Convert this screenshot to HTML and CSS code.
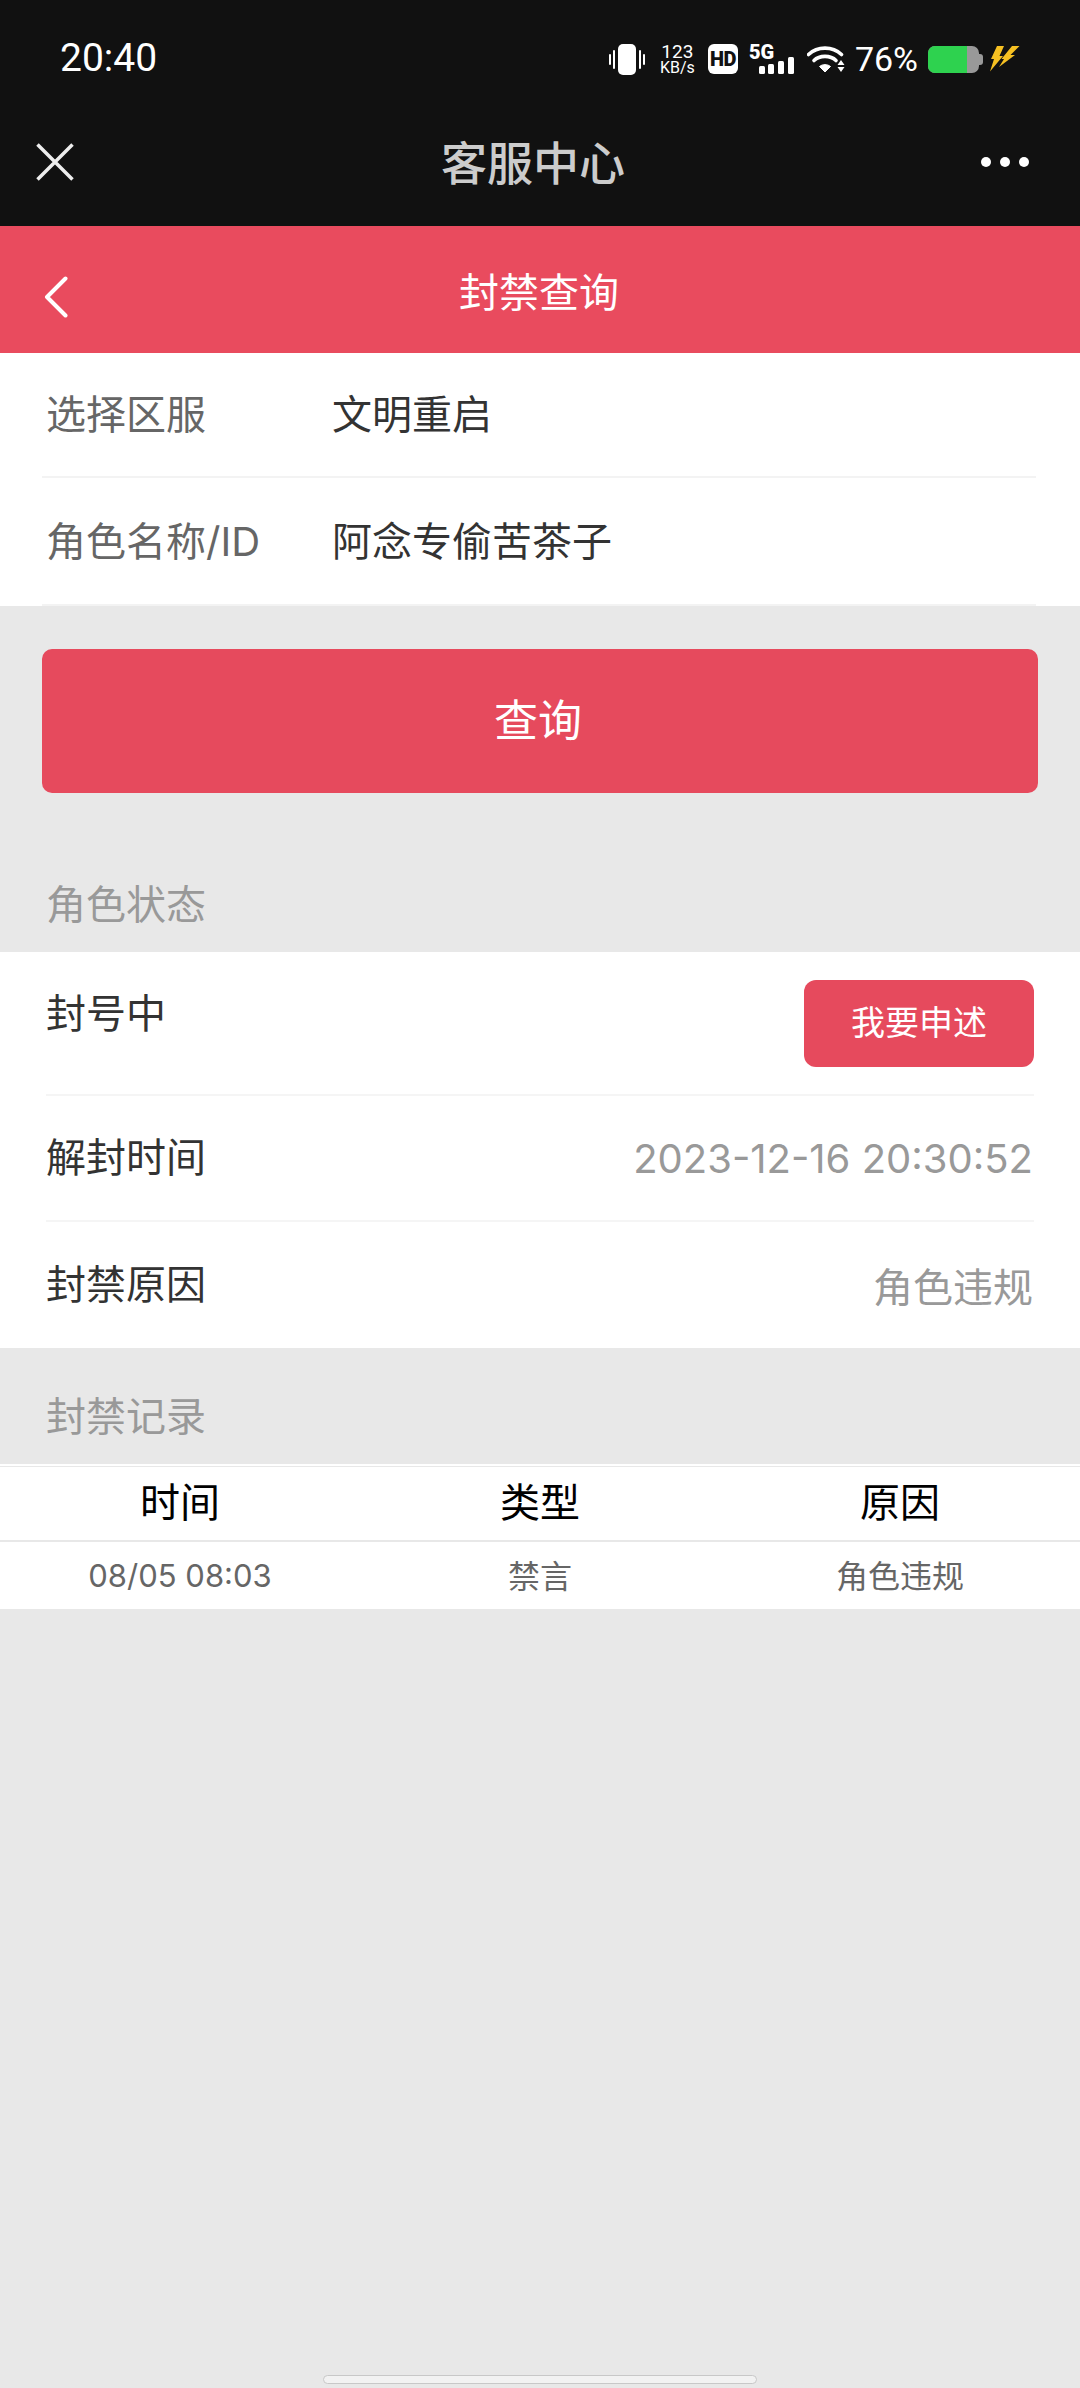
FILE: index.html
```html
<!DOCTYPE html>
<html lang="zh-CN">
<head>
    <meta charset="UTF-8">
    <meta name="viewport" content="width=device-width, initial-scale=1.0">
    <title>封禁查询</title>
    <link rel="stylesheet" href="styles.css">
</head>
<body>
    <div class="status-bar">
        <span class="clock">20:40</span>
        <div class="status-icons">
            <svg class="icon-vibrate" width="36" height="31" viewBox="0 0 36 31">
                <rect x="9" y="0" width="18" height="31" rx="5" fill="#fff"/>
                <path d="M1 11v9M5 7v17M31 7v17M35 11v9" stroke="#fff" stroke-width="2" fill="none" stroke-linecap="round"/>
            </svg>
            <div class="net-speed"><span class="net-num">123</span><span class="net-unit">KB/s</span></div>
            <span class="hd-badge">HD</span>
            <div class="signal">
                <span class="signal-label">5G</span>
                <svg class="signal-bars" width="35" height="17" viewBox="0 0 35 17">
                    <rect x="0" y="9" width="6" height="8" rx="1.500" fill="#fff"/>
                    <rect x="9" y="7" width="6" height="10" rx="1.500" fill="#fff"/>
                    <rect x="19" y="4" width="6" height="13" rx="1.500" fill="#fff"/>
                    <rect x="29" y="0" width="6" height="17" rx="1.500" fill="#fff"/>
                </svg>
            </div>
            <svg class="icon-wifi" width="38" height="28" viewBox="0 0 38 28">
                <path d="M1.500 9.500C10.500 1 25.500 1 34.500 9.500" stroke="#fff" stroke-width="3.600" fill="none" stroke-linecap="round"/>
                <path d="M7 15.500C12.500 10 23.500 10 29 15.500" stroke="#fff" stroke-width="3.600" fill="none" stroke-linecap="round"/>
                <path d="M12.500 21.500C15.500 19 20.500 19 23.500 21.500L18 27Z" fill="#fff" stroke="#fff" stroke-width="1" stroke-linejoin="round"/>
                <path d="M34 15l3.500 5h-7zM30.500 22h7l-3.500 5z" fill="#fff"/>
            </svg>
            <span class="battery-text">76%</span>
            <div class="battery">
                <div class="battery-body"><div class="battery-fill"></div></div>
                <div class="battery-nib"></div>
            </div>
            <svg class="icon-bolt" width="30" height="26" viewBox="0 0 30 26">
                <path d="M7 0H14L9.500 10H13L0 25.500L4 13H1Z" fill="#f6c022"/>
                <path d="M22 0H29.500L20.500 9H25L9 21L14 13H11.500Z" fill="#f6c022"/>
            </svg>
        </div>
    </div>

    <div class="nav-bar">
        <svg class="icon-close" width="38" height="38" viewBox="0 0 38 38">
            <path d="M1.500 1.500L36.500 36.500M36.500 1.500L1.500 36.500" stroke="#eee" stroke-width="3.500" fill="none"/>
        </svg>
        <span class="nav-title">客服中心</span>
        <div class="nav-dots"><span></span><span></span><span></span></div>
    </div>

    <div class="page-header">
        <svg class="icon-back" width="24" height="42" viewBox="0 0 24 42">
            <path d="M21.500 2.500L3 21L21.500 39.500" stroke="#fff" stroke-width="4" fill="none" stroke-linecap="round" stroke-linejoin="round"/>
        </svg>
        <span class="page-title">封禁查询</span>
    </div>

    <div class="form-panel">
        <div class="form-row">
            <span class="form-label">选择区服</span>
            <span class="form-value">文明重启</span>
        </div>
        <div class="form-row">
            <span class="form-label">角色名称/ID</span>
            <span class="form-value">阿念专偷苦茶子</span>
        </div>
    </div>

    <div class="query-wrap">
        <button class="query-btn">查询</button>
    </div>

    <div class="section-title">角色状态</div>
    <div class="status-panel">
        <div class="status-row status-row-top">
            <span class="status-label">封号中</span>
            <button class="appeal-btn">我要申述</button>
        </div>
        <div class="status-row">
            <span class="status-label">解封时间</span>
            <span class="status-value">2023-12-16 20:30:52</span>
        </div>
        <div class="status-row">
            <span class="status-label">封禁原因</span>
            <span class="status-value">角色违规</span>
        </div>
    </div>

    <div class="section-title">封禁记录</div>
    <div class="record-table">
        <div class="record-head">
            <span>时间</span>
            <span>类型</span>
            <span>原因</span>
        </div>
        <div class="record-row">
            <span class="record-date">08/05 08:03</span>
            <span>禁言</span>
            <span>角色违规</span>
        </div>
    </div>

    <div class="home-bar"></div>
</body>
</html>
```

FILE: styles.css
```css
* {
    box-sizing: border-box;
}

body {
    margin: 0;
    width: 1080px;
    height: 2388px;
    position: relative;
    overflow: hidden;
    background-color: #e8e8e8;
    font-family: Inter, "Noto Sans CJK SC", sans-serif;
}

/* status bar */
.status-bar {
    height: 100px;
    padding: 16px 60px 0 60px;
    background-color: #111;
    color: #fff;
    font-family: Roboto, sans-serif;
    display: flex;
    justify-content: space-between;
    align-items: center;
}

.clock {
    font-size: 39px;
}

.status-icons {
    display: flex;
    align-items: center;
    margin-top: 2px;
}

.icon-vibrate {
    margin-right: 15px;
}

.net-speed {
    width: 35px;
    display: flex;
    flex-direction: column;
    align-items: center;
    margin-right: 13px;
}

.net-num {
    font-size: 19px;
    line-height: 17px;
}

.net-unit {
    font-size: 16px;
    line-height: 16px;
}

.hd-badge {
    width: 30px;
    height: 30px;
    border-radius: 6px;
    background-color: #fff;
    color: #111;
    font-size: 20px;
    font-weight: 900;
    letter-spacing: -0.5px;
    text-align: center;
    line-height: 30px;
    margin-right: 11px;
}

.signal {
    width: 45px;
    height: 30px;
    position: relative;
    margin-right: 13px;
}

.signal-label {
    position: absolute;
    left: 0;
    top: -4px;
    font-size: 20px;
    font-weight: 900;
    line-height: 24px;
}

.signal-bars {
    position: absolute;
    right: 0;
    bottom: 0;
}

.icon-wifi {
    margin-right: 10px;
}

.battery-text {
    font-size: 34px;
    margin-right: 10px;
}

.battery {
    display: flex;
    align-items: center;
    margin-right: 7px;
}

.battery-body {
    width: 51px;
    height: 27px;
    border-radius: 7px;
    background-color: #999;
    overflow: hidden;
}

.battery-fill {
    width: 39px;
    height: 100%;
    background-color: #2ed24f;
}

.battery-nib {
    width: 4px;
    height: 11px;
    border-radius: 0 3px 3px 0;
    background-color: #999;
}

/* wechat nav */
.nav-bar {
    height: 126px;
    padding: 0 42px 3px 36px;
    background-color: #111;
    display: flex;
    justify-content: space-between;
    align-items: center;
    position: relative;
}

.nav-title {
    position: absolute;
    left: 0;
    right: 14px;
    padding-bottom: 3px;
    text-align: center;
    color: #ccc;
    font-size: 46px;
    font-weight: 500;
}

.nav-dots {
    display: flex;
    gap: 9px;
    margin-left: auto;
    margin-right: 9px;
}

.nav-dots span {
    width: 10px;
    height: 10px;
    border-radius: 50%;
    background-color: #fff;
}

/* red header */
.page-header {
    height: 127px;
    padding-left: 44px;
    background-color: #e94b5e;
    display: flex;
    align-items: center;
    position: relative;
}

.icon-back {
    margin-top: 14px;
}

.page-title {
    position: absolute;
    left: 0;
    right: 2px;
    text-align: center;
    color: #fff;
    font-size: 40px;
}

/* form */
.form-panel {
    height: 253px;
    padding: 0 44px 0 42px;
    background-color: #fff;
}

.form-row {
    height: 125px;
    padding: 0 0 5px 4px;
    border-bottom: 2px solid #f3f3f3;
    display: flex;
    align-items: center;
    font-size: 40px;
}

.form-row:last-child {
    height: 128px;
}

.form-label {
    width: 286px;
    color: #666;
}

.form-value {
    color: #333;
}

.query-wrap {
    padding: 43px 42px;
}

.query-btn {
    display: block;
    width: 996px;
    height: 144px;
    padding: 0 4px 6px 0;
    border: none;
    border-radius: 10px;
    background-color: #e64a5d;
    color: #fff;
    font-family: inherit;
    font-size: 44px;
}

.section-title {
    padding: 41px 46px 19px;
    color: #999;
    font-size: 40px;
    line-height: 56px;
}

/* role status */
.status-panel {
    padding: 0 46px;
    background-color: #fff;
}

.status-row {
    height: 126px;
    border-bottom: 2px solid #f5f5f5;
    display: flex;
    justify-content: space-between;
    align-items: center;
    font-size: 40px;
}

.status-row:last-child {
    border-bottom: none;
}

.status-row-top {
    height: 144px;
    align-items: flex-start;
    padding-top: 32px;
}

.status-row-top .appeal-btn {
    margin-top: -4px;
}

.status-label {
    color: #333;
    line-height: 60px;
}

.status-value {
    color: #999;
    margin-right: 1px;
}

.appeal-btn {
    width: 230px;
    height: 87px;
    padding: 0 0 7px;
    border: none;
    border-radius: 12px;
    background-color: #e64a5d;
    color: #fff;
    font-family: inherit;
    font-size: 34px;
}

/* records */
.record-table {
    border-top: 2px solid #fff;
    padding-top: 1px;
}

.record-head,
.record-row {
    display: grid;
    grid-template-columns: repeat(3, 1fr);
    background-color: #fff;
    text-align: center;
    align-items: center;
}

.record-head {
    height: 75px;
    padding-bottom: 8px;
    border-bottom: 2px solid #e8e8e8;
    color: #000;
    font-size: 40px;
}

.record-row {
    height: 67px;
    padding-bottom: 4px;
    color: #666;
    font-size: 32px;
}

.record-date {
    padding-top: 4px;
    font-size: 31px;
}

.home-bar {
    position: absolute;
    left: 323px;
    bottom: 4px;
    width: 434px;
    height: 9px;
    border-radius: 5px;
    background-color: #f2f2f2;
    border: 1px solid #c8c8c8;
}
```
